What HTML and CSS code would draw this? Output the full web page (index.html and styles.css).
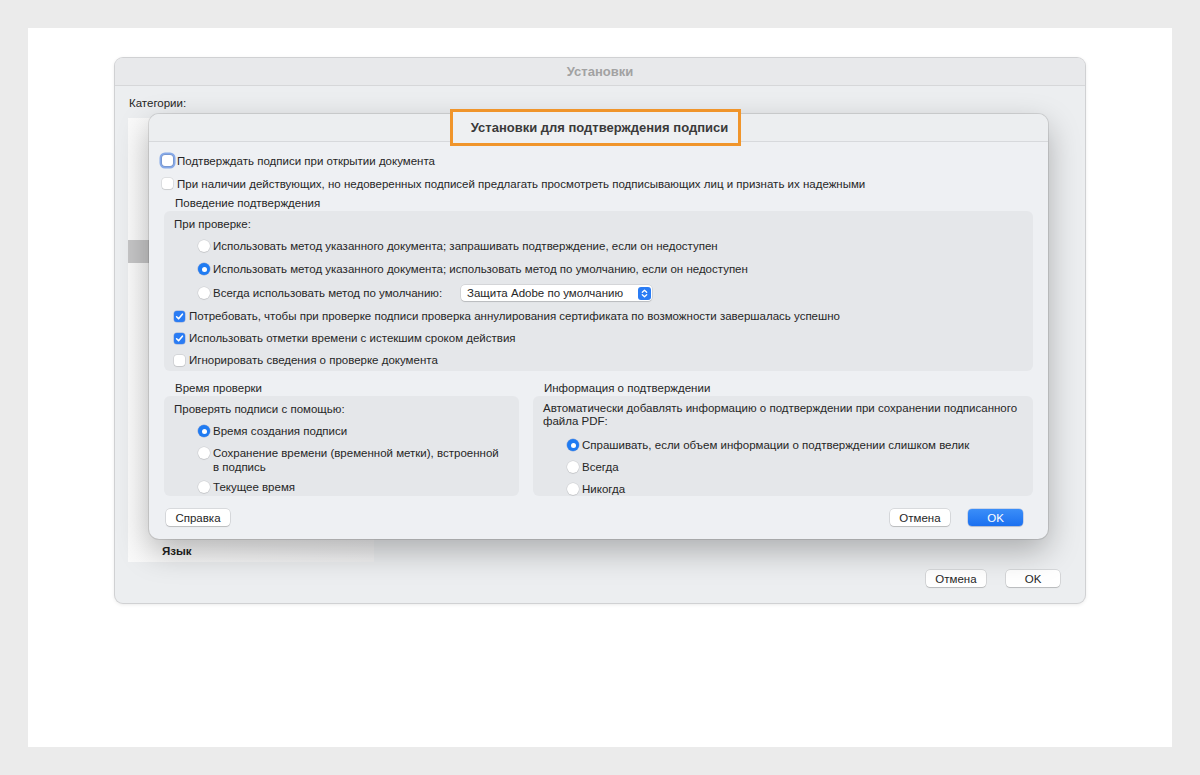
FILE: index.html
```html
<!DOCTYPE html>
<html lang="ru">
<head>
<meta charset="utf-8">
<title>Установки для подтверждения подписи</title>
<link rel="stylesheet" href="styles.css">
</head>
<body>
<div class="frame">
  <div class="window">
    <div class="win-title">Установки</div>
    <div class="win-body">
      <div class="cat-label">Категории:</div>
      <div class="win-main">
        <div class="sidebar">
          <div class="side-sel"></div>
          <div class="side-item">Язык</div>
        </div>
        <div class="pane"></div>
      </div>
      <div class="win-buttons">
        <button class="btn w60">Отмена</button>
        <button class="btn w54">OK</button>
      </div>
    </div>

    <div class="sheet">
      <div class="sheet-title"><span class="hl">Установки для подтверждения подписи</span></div>
      <div class="sheet-body">
        <div class="row top-row"><span class="cb focus"></span><span class="lbl-cb">Подтверждать подписи при открытии документа</span></div>
        <div class="row top-row"><span class="cb"></span><span class="lbl-cb">При наличии действующих, но недоверенных подписей предлагать просмотреть подписывающих лиц и признать их надежными</span></div>
        <div class="sec-label">Поведение подтверждения</div>
        <div class="group g-behavior">
          <div class="row h22 pad">При проверке:</div>
          <div class="row h22 indent"><span class="radio"></span><span class="lbl-r">Использовать метод указанного документа; запрашивать подтверждение, если он недоступен</span></div>
          <div class="row h24 indent"><span class="radio on"></span><span class="lbl-r">Использовать метод указанного документа; использовать метод по умолчанию, если он недоступен</span></div>
          <div class="row h24 indent">
            <span class="radio"></span><span class="lbl-r fixed">Всегда использовать метод по умолчанию:</span>
            <span class="select"><span class="select-text">Защита Adobe по умолчанию</span><span class="stepper"><svg width="13" height="13" viewBox="0 0 13 13"><path d="M4.3 5.2 6.5 3.2 8.7 5.2M4.3 7.8 6.5 9.8 8.7 7.8" fill="none" stroke="#fff" stroke-width="1.3" stroke-linecap="round" stroke-linejoin="round"/></svg></span></span>
          </div>
          <div class="row h22 pad"><span class="cb on"><svg width="11" height="11" viewBox="0 0 11 11"><path d="M2.6 5.8 4.6 7.8 8.4 3.2" fill="none" stroke="#fff" stroke-width="1.6" stroke-linecap="round" stroke-linejoin="round"/></svg></span><span class="lbl-cb">Потребовать, чтобы при проверке подписи проверка аннулирования сертификата по возможности завершалась успешно</span></div>
          <div class="row h22 pad"><span class="cb on"><svg width="11" height="11" viewBox="0 0 11 11"><path d="M2.6 5.8 4.6 7.8 8.4 3.2" fill="none" stroke="#fff" stroke-width="1.6" stroke-linecap="round" stroke-linejoin="round"/></svg></span><span class="lbl-cb">Использовать отметки времени с истекшим сроком действия</span></div>
          <div class="row h22 pad"><span class="cb"></span><span class="lbl-cb">Игнорировать сведения о проверке документа</span></div>
        </div>

        <div class="two-col">
          <div class="col col-left">
            <div class="sec-label">Время проверки</div>
            <div class="group g-bottom">
              <div class="row h22 pad">Проверять подписи с помощью:</div>
              <div class="row h22 indent"><span class="radio on"></span><span class="lbl-r">Время создания подписи</span></div>
              <div class="row two-line indent"><span class="radio"></span><span class="lbl-r">Сохранение времени (временной метки), встроенной<br>в подпись</span></div>
              <div class="row h22 indent"><span class="radio"></span><span class="lbl-r">Текущее время</span></div>
            </div>
          </div>
          <div class="col col-right">
            <div class="sec-label">Информация о подтверждении</div>
            <div class="group g-bottom">
              <div class="para pad">Автоматически добавлять информацию о подтверждении при сохранении подписанного<br>файла PDF:</div>
              <div class="row h22 indent first-after-para"><span class="radio on"></span><span class="lbl-r">Спрашивать, если объем информации о подтверждении слишком велик</span></div>
              <div class="row h22 indent"><span class="radio"></span><span class="lbl-r">Всегда</span></div>
              <div class="row h22 indent"><span class="radio"></span><span class="lbl-r">Никогда</span></div>
            </div>
          </div>
        </div>

        <div class="sheet-buttons">
          <button class="btn w64">Справка</button>
          <span class="spacer"></span>
          <button class="btn w60">Отмена</button>
          <button class="btn primary w55">OK</button>
        </div>
      </div>
    </div>
  </div>
</div>
</body>
</html>
```

FILE: styles.css
```css
html, body {
  margin: 0;
  padding: 0;
}
body {
  background: #ebebeb;
  font-family: "Liberation Sans", Arial, sans-serif;
  font-size: 11.5px;
  color: #262626;
}
.frame {
  margin: 28px;
  height: 719px;
  background: #ffffff;
  padding: 30px 0 0 87px;
  box-sizing: border-box;
}
.window {
  position: relative;
  width: 970px;
  height: 545px;
  background: #eceef0;
  border-radius: 8px;
  box-shadow: 0 0 0 1px #d0d1d3, 0 1px 4px rgba(0,0,0,0.12);
}
.win-title {
  height: 28px;
  box-sizing: border-box;
  border-bottom: 1px solid #d6d7d9;
  background: #e8e9eb;
  border-radius: 8px 8px 0 0;
  text-align: center;
  line-height: 27px;
  font-size: 13px;
  font-weight: bold;
  color: #a2a2a2;
}
.win-body {
  padding: 10px 13px 0;
}
.cat-label {
  height: 14px;
  line-height: 14px;
  padding-left: 1px;
  margin-bottom: 8px;
}
.win-main {
  display: flex;
  height: 444px;
}
.sidebar {
  width: 246px;
  background: linear-gradient(90deg, #fafafa, #f2f2f3);
  display: flex;
  flex-direction: column;
}
.side-sel {
  margin-top: 122px;
  height: 23px;
  background: #c6c6c7;
}
.side-item {
  margin-top: auto;
  height: 21px;
  line-height: 21px;
  padding-left: 34px;
  font-weight: bold;
  color: #222;
}
.pane {
  flex: 1;
}
.win-buttons {
  display: flex;
  justify-content: flex-end;
  gap: 20px;
  margin-top: 8px;
  padding-right: 12px;
}
.btn {
  height: 17px;
  padding: 0;
  border: none;
  border-radius: 4px;
  background: #ffffff;
  font-family: "Liberation Sans", Arial, sans-serif;
  font-size: 11.5px;
  color: #262626;
  box-shadow: 0 0 0 0.5px rgba(0,0,0,0.18), 0 1px 1px rgba(0,0,0,0.14);
}
.w54 { width: 54px; }
.w55 { width: 55px; }
.w60 { width: 60px; }
.w64 { width: 64px; }
.btn.primary {
  background: linear-gradient(#3b8ef8, #1b70f0);
  color: #ffffff;
  margin-left: 18px;
  box-shadow: 0 0 0 0.5px rgba(0,60,180,0.3), 0 1px 1px rgba(0,0,0,0.12);
}

/* sheet */
.sheet {
  position: absolute;
  left: 34px;
  top: 56px;
  width: 899px;
  height: 425px;
  background: #eef0f3;
  border-radius: 10px;
  box-shadow: 0 0 0 1px rgba(0,0,0,0.10), 0 12px 32px rgba(0,0,0,0.28);
}
.sheet-title {
  height: 28px;
  box-sizing: border-box;
  border-bottom: 1px solid #d7d9dc;
  background: #eceef0;
  border-radius: 10px 10px 0 0;
  display: flex;
  justify-content: center;
  align-items: flex-start;
}
.hl {
  margin-top: -5px;
  margin-left: -6px;
  height: 37px;
  box-sizing: border-box;
  border: 3px solid #f0952b;
  background: #eef0f2;
  padding: 0 10px 0 18px;
  line-height: 31px;
  font-size: 13px;
  font-weight: bold;
  color: #3a3a3a;
  white-space: nowrap;
}
.sheet-body {
  padding: 7px 15px 0;
}
.row {
  display: flex;
  align-items: center;
}
.top-row {
  height: 23px;
  margin-left: -2px;
}
.h22 { height: 22px; }
.h24 { height: 24px; }
.pad { padding-left: 10px; }
.indent { padding-left: 34px; }
.sec-label {
  height: 16px;
  line-height: 16px;
  padding-left: 11px;
}
.group {
  background: #e5e7ea;
  border-radius: 6px;
  padding-top: 2px;
  box-sizing: border-box;
}
.g-behavior { height: 160px; }
.g-bottom { height: 100px; }

.cb {
  flex: none;
  width: 11px;
  height: 11px;
  border-radius: 3px;
  background: #ffffff;
  box-shadow: 0 0 0 0.5px rgba(0,0,0,0.14), 0 1px 1px rgba(0,0,0,0.08);
  display: inline-flex;
}
.cb.focus {
  box-shadow: 0 0 0 0.5px rgba(0,0,0,0.2), 0 0 0 2.5px #86a9e8;
}
.cb.on {
  background: #2a7cf4;
  box-shadow: 0 0 0 0.5px rgba(0,60,180,0.35);
}
.lbl-cb { margin-left: 4px; white-space: nowrap; }
.radio {
  flex: none;
  width: 12px;
  height: 12px;
  border-radius: 50%;
  background: #ffffff;
  box-shadow: 0 0 0 0.5px rgba(0,0,0,0.12), 0 1px 1px rgba(0,0,0,0.08);
  position: relative;
}
.radio.on {
  background: #1f7bf2;
  box-shadow: 0 0 0 0.5px rgba(0,60,180,0.35);
}
.radio.on::after {
  content: "";
  position: absolute;
  left: 3.5px;
  top: 3.5px;
  width: 5px;
  height: 5px;
  border-radius: 50%;
  background: #ffffff;
}
.lbl-r { margin-left: 3px; white-space: nowrap; }
.lbl-r.fixed { width: 248px; }

.select {
  width: 191px;
  height: 16px;
  box-sizing: border-box;
  background: #ffffff;
  border-radius: 4px;
  box-shadow: 0 0 0 0.5px rgba(0,0,0,0.15), 0 1px 1px rgba(0,0,0,0.12);
  display: flex;
  align-items: center;
  padding: 0 1px 0 6px;
}
.select-text { flex: 1; }
.stepper {
  width: 13px;
  height: 13px;
  border-radius: 3px;
  background: #2a7cf4;
  display: inline-flex;
}

.two-col {
  display: flex;
  gap: 14px;
  margin-top: 9px;
}
.col-left { width: 355px; }
.col-right { width: 500px; }
.two-line {
  align-items: flex-start;
  height: 34px;
  padding-top: 4px;
  box-sizing: border-box;
  line-height: 14px;
}
.two-line .radio { margin-top: 1px; }
.para {
  padding-top: 4px;
  line-height: 13px;
}
.first-after-para { margin-top: 6px; }

.sheet-buttons {
  display: flex;
  align-items: center;
  margin-top: 13px;
  padding: 0 10px 0 2px;
}
.spacer { flex: 1; }
```
